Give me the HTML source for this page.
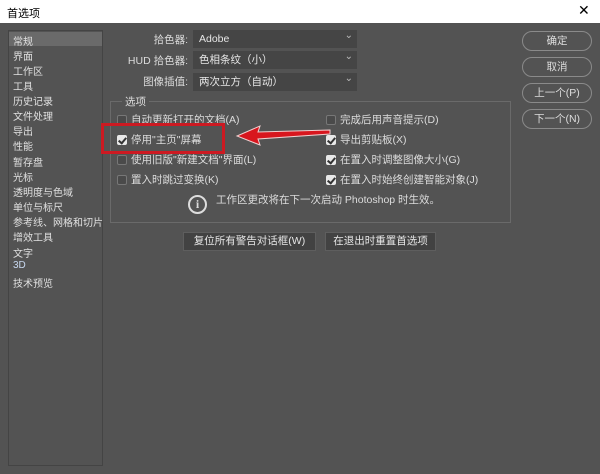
<!DOCTYPE html><html><head><meta charset="utf-8"><style>
*{margin:0;padding:0;box-sizing:border-box}
body{width:600px;height:474px;background:#535353;font-family:"Liberation Sans","Noto Sans CJK SC",sans-serif;font-size:10.5px;color:#dcdcdc;position:relative;overflow:hidden}
.a{position:absolute;white-space:nowrap}
#title{left:0;top:0;width:600px;height:23px;background:#fff;color:#000;font-size:11px}
#side{left:8px;top:30px;width:95px;height:436px;border:1px solid #444}
.si{position:absolute;left:4px;font-size:10px;color:#e0e0e0}
.lbl{right:412px;text-align:right}
.dd{left:193px;width:164px;height:18px;background:#454545;padding-left:6px;line-height:18px;color:#e6e6e6}
.dd:after{content:"⌄";position:absolute;right:4px;top:-3px;font-size:10px;color:#bbb}
.rb{left:522px;width:70px;height:20px;border:1px solid #8a8a8a;border-radius:10px;text-align:center;line-height:18px;color:#ddd}
.cb{width:10px;height:10px;border:1px solid #777;border-radius:2px;background:#4a4a4a}
.ck{background:#e8e8e8;border-color:#e8e8e8}
.ck:after{content:"";position:absolute;left:2px;top:0px;width:3px;height:6px;border:solid #333;border-width:0 2px 2px 0;transform:rotate(40deg)}
.bb{height:19px;background:#424242;border:1px solid #5e5e5e;text-align:center;line-height:17px;color:#e6e6e6}
</style></head><body>
<div class="a" id="title"><span style="position:absolute;left:7px;top:5px">首选项</span><span style="position:absolute;left:578px;top:2px;font-size:14px">✕</span></div>
<div class="a" id="side">
<div class="a" style="left:0;top:1px;width:93px;height:14px;background:#6a6a6a"></div>
<span class="si" style="top:2px">常规</span><span class="si" style="top:17px">界面</span><span class="si" style="top:32px">工作区</span><span class="si" style="top:47px">工具</span><span class="si" style="top:62px">历史记录</span><span class="si" style="top:77px">文件处理</span><span class="si" style="top:92px">导出</span><span class="si" style="top:107px">性能</span><span class="si" style="top:123px">暂存盘</span><span class="si" style="top:138px">光标</span><span class="si" style="top:153px">透明度与色域</span><span class="si" style="top:168px">单位与标尺</span><span class="si" style="top:183px">参考线、网格和切片</span><span class="si" style="top:198px">增效工具</span><span class="si" style="top:214px">文字</span><span class="si" style="top:229px;color:#c8d8f0">3D</span><span class="si" style="top:244px">技术预览</span>
</div>
<span class="a lbl" style="top:32px">拾色器:</span>
<span class="a lbl" style="top:53px">HUD 拾色器:</span>
<span class="a lbl" style="top:74px">图像插值:</span>
<div class="a dd" style="top:30px">Adobe</div>
<div class="a dd" style="top:51px">色相条纹（小）</div>
<div class="a dd" style="top:73px">两次立方（自动）</div>
<div class="a rb" style="top:31px">确定</div>
<div class="a rb" style="top:57px">取消</div>
<div class="a rb" style="top:83px">上一个(P)</div>
<div class="a rb" style="top:109px">下一个(N)</div>
<div class="a" style="left:110px;top:101px;width:401px;height:122px;border:1px solid #6a6a6a"></div>
<span class="a" style="left:122px;top:94px;background:#535353;padding:0 3px">选项</span>
<div class="a cb" style="left:117px;top:115px"></div><span class="a" style="left:131px;top:112px">自动更新打开的文档(A)</span>
<div class="a cb ck" style="left:117px;top:135px"></div><span class="a" style="left:131px;top:132px">停用"主页"屏幕</span>
<div class="a cb" style="left:117px;top:155px"></div><span class="a" style="left:131px;top:152px">使用旧版"新建文档"界面(L)</span>
<div class="a cb" style="left:117px;top:175px"></div><span class="a" style="left:131px;top:172px">置入时跳过变换(K)</span>
<div class="a cb" style="left:326px;top:115px"></div><span class="a" style="left:340px;top:112px">完成后用声音提示(D)</span>
<div class="a cb ck" style="left:326px;top:135px"></div><span class="a" style="left:340px;top:132px">导出剪贴板(X)</span>
<div class="a cb ck" style="left:326px;top:155px"></div><span class="a" style="left:340px;top:152px">在置入时调整图像大小(G)</span>
<div class="a cb ck" style="left:326px;top:175px"></div><span class="a" style="left:340px;top:172px">在置入时始终创建智能对象(J)</span>
<div class="a" style="left:188px;top:195px;width:19px;height:19px;border:2px solid #ddd;border-radius:50%;text-align:center;font-weight:bold;font-size:12px;line-height:15px;font-family:'Liberation Serif',serif">i</div>
<span class="a" style="left:216px;top:192px">工作区更改将在下一次启动 Photoshop 时生效。</span>
<div class="a bb" style="left:183px;top:232px;width:133px">复位所有警告对话框(W)</div>
<div class="a bb" style="left:325px;top:232px;width:111px">在退出时重置首选项</div>
<div class="a" style="left:101px;top:123px;width:124px;height:31px;border:3px solid #cc1a22"></div>
<svg class="a" style="left:0;top:0" width="600" height="474"><path d="M330 130 L258 132 L260 126 L237 136 L260 145 L258 139 L330 134 Z" fill="#d8161e" stroke="#f0d0d0" stroke-width="1"/></svg>
</body></html>
